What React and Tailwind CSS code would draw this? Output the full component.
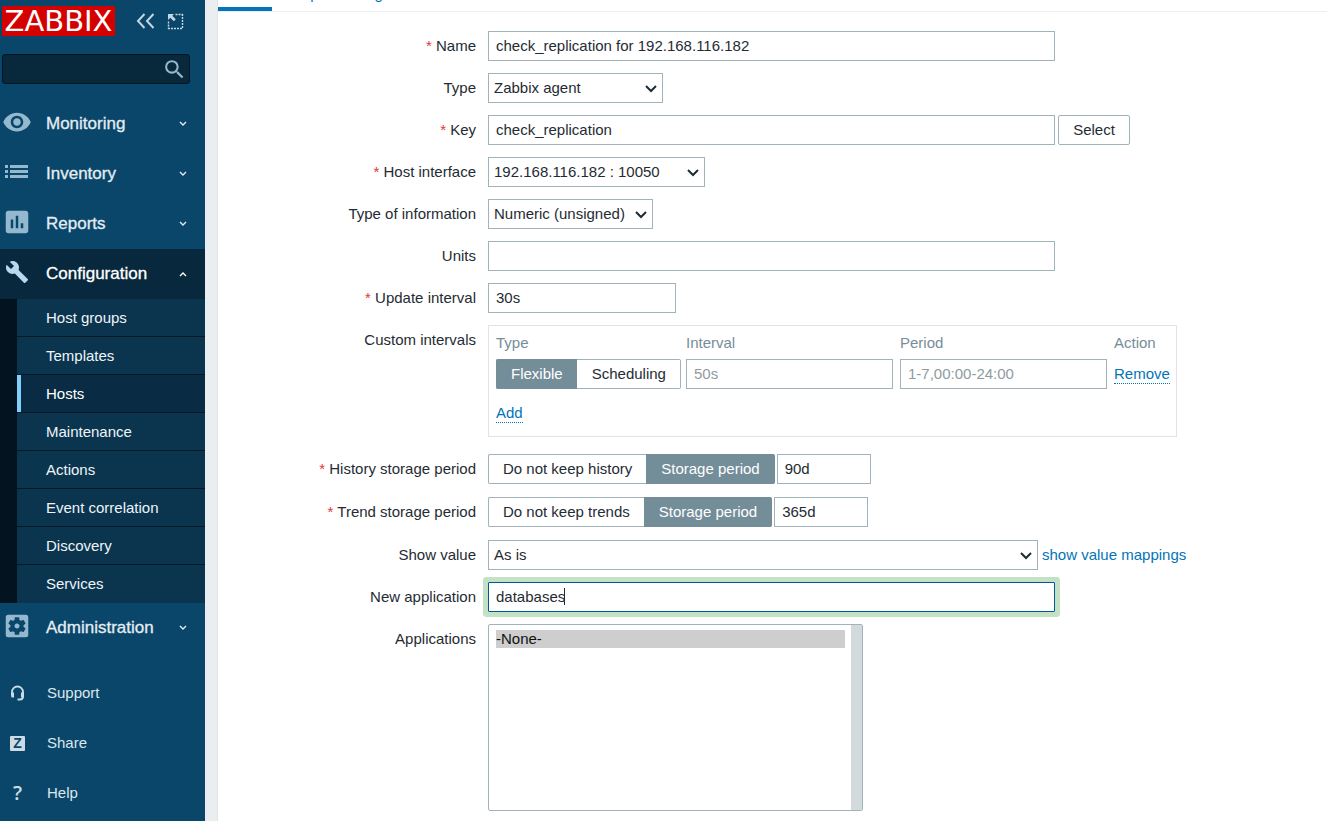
import React, { useEffect, useRef } from 'react';
import { MdVisibility, MdAssessment, MdSettingsApplications, MdSearch } from 'react-icons/md';
import clsx from 'clsx';

const inputClass = 'h-[30px] border border-[#a0b3bb] bg-white px-[7px] pb-[2px] text-[#1f2c33] placeholder:text-[#8f9ba1] outline-none';

const configItems = ['Host groups', 'Templates', 'Hosts', 'Maintenance', 'Actions', 'Event correlation', 'Discovery', 'Services'];

const ListIcon = () => (
    <svg width="24" height="16" viewBox="0 0 24 16" fill="currentColor" aria-hidden="true">
        <path d="M0 1h3v3H0zM5 1h18v3H5zM0 6h3v3H0zM5 6h18v3H5zM0 11h3v3H0zM5 11h18v3H5z" />
    </svg>
);

const WrenchIcon = () => (
    <svg width="24" height="24" viewBox="0 0 24 24" fill="currentColor" className="ml-[5px]" aria-hidden="true">
        <path d="M22.700 19l-9.100-9.100c.9-2.300.4-5-1.500-6.900-2-2-5-2.400-7.400-1.300L9 6 6 9 1.600 4.700C.4 7.100.9 10.100 2.900 12.100c1.900 1.900 4.600 2.400 6.900 1.500l9.100 9.100c.4.4 1 .4 1.400 0l2.300-2.300c.5-.4.5-1.100.1-1.400z" />
    </svg>
);

const HeadsetIcon = () => (
    <svg width="15" height="16" viewBox="0 0 15 16" fill="none" stroke="currentColor" strokeWidth="1.8" aria-hidden="true">
        <path d="M2 10V7a5.500 5.500 0 0 1 11 0v4.500a3 3 0 0 1-3 3H7.500" />
        <path d="M1.100 7.500H4v5H2.600a1.500 1.500 0 0 1-1.500-1.500zM11 7.500h2.900v5H11z" fill="currentColor" stroke="none" />
    </svg>
);

const Chevron = ({ up }) => (
    <svg width="8" height="6" viewBox="0 0 8 6" fill="none" stroke="currentColor" strokeWidth="1.4" aria-hidden="true">
        <path d={up ? 'M1 5l3-3 3 3' : 'M1 1l3 3 3-3'} />
    </svg>
);

const MenuItem = ({ icon, label, open }) => (
    <a
        href="#"
        className={clsx(
            'flex h-[50px] items-center text-[17px] leading-6 [-webkit-text-stroke:0.3px_currentColor]',
            open ? 'bg-[#07283d] text-white' : 'text-[#e3edf3]'
        )}
    >
        <span className={clsx('flex w-[46px] items-center pb-1', open ? 'text-[#b5d9ef]' : 'text-[#94b9cf]')}>{icon}</span>
        <span className="flex-1">{label}</span>
        <span className="pr-[18px]">
            <Chevron up={open} />
        </span>
    </a>
);

const FooterItem = ({ icon, label }) => (
    <a href="#" className="flex h-[50px] items-center text-[#dce7ee]">
        <span className="flex w-[47px] items-center pl-[10px] text-[#cbdce6]">{icon}</span>
        {label}
    </a>
);

const Sidebar = () => (
    <aside className="w-[205px] shrink-0 bg-[#0a466a]">
        <div className="flex h-[42px] items-center pl-[2px]">
            <a href="#" className="flex h-[30px] w-[113px] items-center justify-center bg-[#d40000] font-['DejaVu_Sans'] text-[29px] leading-none text-white">
                ZABBIX
            </a>
            <button type="button" aria-label="Collapse sidebar" className="ml-[21px] text-[#c3d6e2]">
                <svg width="19" height="16" viewBox="0 0 19 16" fill="none" stroke="currentColor" strokeWidth="2">
                    <path d="M8.500 1L2 8l6.500 7M17.500 1L11 8l6.500 7" />
                </svg>
            </button>
            <button type="button" aria-label="Kiosk mode" className="ml-[12px] text-[#c3d6e2]">
                <svg width="17" height="17" viewBox="0 0 17 17" fill="none" stroke="currentColor">
                    <path d="M8.500 1.500H16M15.500 1v15M1.500 8.500V16M1 15.500h15" strokeWidth="1.400" strokeDasharray="2 1" />
                    <path d="M1 1h6L5.300 2.800l3.500 3.500-2 2-3.500-3.500L1 7z" fill="currentColor" stroke="none" />
                </svg>
            </button>
        </div>
        <div className="mt-3 ml-[2px] mr-[15px] flex h-[30px] items-center rounded-[3px] border border-[#031522] bg-[#08283b]">
            <input type="text" aria-label="Search" className="min-w-0 flex-1 bg-transparent px-2 text-white outline-none" />
            <button type="button" aria-label="Search" className="pr-[2px] text-[#94b9cf]">
                <MdSearch size={25} />
            </button>
        </div>

        <nav className="mt-[15px]">
            <MenuItem label="Monitoring" icon={<MdVisibility size={30} className="ml-[2px]" />} />
            <MenuItem label="Inventory" icon={<span className="pl-[5px]"><ListIcon /></span>} />
            <MenuItem label="Reports" icon={<MdAssessment size={30} className="ml-[2px]" />} />
            <MenuItem label="Configuration" open icon={<WrenchIcon />} />
            <ul className="border-l-[17px] border-[#03131f] bg-[#0b344f]">
                {configItems.map((item) => (
                    <li key={item} className="h-[38px] border-b border-[#041a29] last:border-[#0b344f]">
                        <a
                            href="#"
                            className={clsx(
                                'flex h-full items-center border-l-4 pl-[25px]',
                                item === 'Hosts' ? 'border-[#80d0fb] bg-[#092c44] text-white' : 'border-transparent text-[#edf4f8]'
                            )}
                        >
                            {item}
                        </a>
                    </li>
                ))}
            </ul>
            <MenuItem label="Administration" icon={<MdSettingsApplications size={30} className="ml-[2px]" />} />
        </nav>

        <nav className="mt-[15px]">
            <FooterItem label="Support" icon={<HeadsetIcon />} />
            <FooterItem
                label="Share"
                icon={<span className="flex size-[15px] items-center justify-center rounded-[1px] bg-[#cbdce6] text-sm leading-none font-bold text-[#0a466a]">Z</span>}
            />
            <FooterItem label="Help" icon={<span className="w-[15px] text-center font-['Open_Sans'] text-xl leading-none font-semibold">?</span>} />
        </nav>
    </aside>
);

const Row = ({ label, id, required, className, children }) => (
    <div className={clsx('grid grid-cols-[258px_1fr] gap-3', className)}>
        <label htmlFor={id} className="h-[30px] text-right leading-[30px]">
            {required && <span className="text-[#e33734]">* </span>}
            {label}
        </label>
        <div className="flex items-center">{children}</div>
    </div>
);

const Select = ({ id, value, className }) => (
    <div className={clsx('relative', className)}>
        <select id={id} className="h-[30px] w-full appearance-none border border-[#a0b3bb] bg-white pl-[5px] outline-none">
            <option>{value}</option>
        </select>
        <svg className="pointer-events-none absolute top-[12px] right-[5px]" width="13" height="8" viewBox="0 0 13 8" fill="none" stroke="#1f2c33" strokeWidth="2">
            <path d="M1 1l5 5 5-5" />
        </svg>
    </div>
);

const RadioGroup = ({ name, options, selected }) => (
    <div role="radiogroup" aria-label={name} className="flex">
        {options.map((option) => (
            <label
                key={option}
                className={clsx(
                    'flex h-[30px] items-center border px-[14px] whitespace-nowrap first:rounded-l-xs first:border-r-0 last:rounded-r-xs last:border-l-0 last:pl-[15px]',
                    option === selected ? 'border-[#738d99] bg-[#738d99] text-white' : 'border-[#a0b3bb] bg-white'
                )}
            >
                <input type="radio" name={name} defaultChecked={option === selected} className="sr-only" />
                {option}
            </label>
        ))}
    </div>
);

const CustomIntervals = () => (
    <div className="w-[689px] border border-[#dfe4e7] px-[7px] pt-[5px] pb-[13px]">
        <table className="w-full table-fixed text-left">
            <thead>
                <tr className="h-[24px] text-[#768d99]">
                    <th className="w-[190px] font-normal">Type</th>
                    <th className="w-[214px] font-normal">Interval</th>
                    <th className="w-[214px] font-normal">Period</th>
                    <th className="font-normal">Action</th>
                </tr>
            </thead>
            <tbody>
                <tr className="h-[38px]">
                    <td>
                        <RadioGroup name="Interval type" options={['Flexible', 'Scheduling']} selected="Flexible" />
                    </td>
                    <td>
                        <input aria-label="Interval" placeholder="50s" className={clsx(inputClass, 'w-[207px]')} />
                    </td>
                    <td>
                        <input aria-label="Period" placeholder="1-7,00:00-24:00" className={clsx(inputClass, 'w-[207px]')} />
                    </td>
                    <td>
                        <button type="button" className="border-b border-dotted border-[#0275b8] leading-[18px] text-[#0275b8]">Remove</button>
                    </td>
                </tr>
                <tr className="h-[30px]">
                    <td className="align-bottom">
                        <button type="button" className="border-b border-dotted border-[#0275b8] leading-[18px] text-[#0275b8]">Add</button>
                    </td>
                </tr>
            </tbody>
        </table>
    </div>
);

const App = () => {
    const applicationRef = useRef(null);

    useEffect(() => {
        const field = applicationRef.current;
        field.focus();
        field.setSelectionRange(field.value.length, field.value.length);
    }, []);

    return (
        <div className="flex min-h-screen bg-[#ebeef0] font-['Liberation_Sans',Arial,sans-serif] text-[15px] leading-5 text-[#1f2c33]">
            <Sidebar />

            <main className="ml-3 min-w-0 flex-1 border-l border-[#dfe4e7] bg-white">
                {/* Tabs, scrolled almost out of view */}
                <nav className="flex h-3 items-end overflow-hidden border-b border-[#ebeef0]">
                    <a href="#" aria-label="Item" className="h-1 w-[54px] bg-[#0275b8]" />
                    <a href="#" className="px-[15px] pb-[7px] text-[#0275b8]">Preprocessing</a>
                </nav>

                <form className="mt-[19px] flex flex-col gap-3 pb-[10px]">
                    <Row label="Name" id="name" required>
                        <input id="name" defaultValue="check_replication for 192.168.116.182" className={clsx(inputClass, 'w-[567px]')} />
                    </Row>
                    <Row label="Type" id="type">
                        <Select id="type" value="Zabbix agent" className="w-[175px]" />
                    </Row>
                    <Row label="Key" id="key" required>
                        <input id="key" defaultValue="check_replication" className={clsx(inputClass, 'w-[567px]')} />
                        <button type="button" className="ml-[3px] h-[30px] w-[72px] rounded-xs border border-[#a0b3bb]">Select</button>
                    </Row>
                    <Row label="Host interface" id="interface" required>
                        <Select id="interface" value="192.168.116.182 : 10050" className="w-[217px]" />
                    </Row>
                    <Row label="Type of information" id="value-type">
                        <Select id="value-type" value="Numeric (unsigned)" className="w-[165px]" />
                    </Row>
                    <Row label="Units" id="units">
                        <input id="units" className={clsx(inputClass, 'w-[567px]')} />
                    </Row>
                    <Row label="Update interval" id="delay" required>
                        <input id="delay" defaultValue="30s" className={clsx(inputClass, 'w-[188px]')} />
                    </Row>
                    <Row label="Custom intervals">
                        <CustomIntervals />
                    </Row>
                    <Row label="History storage period" id="history" required className="mt-[5px]">
                        <RadioGroup name="History" options={['Do not keep history', 'Storage period']} selected="Storage period" />
                        <input id="history" defaultValue="90d" className={clsx(inputClass, 'ml-[2px] w-[94px]')} />
                    </Row>
                    <Row label="Trend storage period" id="trends" required className="mt-px">
                        <RadioGroup name="Trends" options={['Do not keep trends', 'Storage period']} selected="Storage period" />
                        <input id="trends" defaultValue="365d" className={clsx(inputClass, 'ml-[2px] w-[94px]')} />
                    </Row>
                    <Row label="Show value" id="valuemap" className="mt-px">
                        <Select id="valuemap" value="As is" className="w-[550px]" />
                        <a href="#" className="ml-1 text-[#0275b8]">show value mappings</a>
                    </Row>
                    <Row label="New application" id="new-application">
                        <div className="relative">
                            <input
                                id="new-application"
                                ref={applicationRef}
                                defaultValue="databases"
                                className="block h-[30px] w-[567px] rounded-[1px] border border-[#00589c] bg-white px-[7px] pb-[2px] caret-transparent ring-5 ring-[#c3e2c5] outline-none"
                            />
                            {/* Text cursor */}
                            <span className="pointer-events-none absolute top-[6px] left-[76px] h-[17px] w-px bg-[#1f2c33]" />
                        </div>
                    </Row>
                    <Row label="Applications" id="applications">
                        <div className="flex h-[187px] w-[375px] overflow-hidden rounded-xs border border-[#a0b3bb]">
                            <select id="applications" multiple defaultValue={['0']} className="min-w-0 flex-1 py-[5px] pr-[6px] pl-[7px] outline-none">
                                <option value="0" className="h-[18px] p-0 leading-[18px]">-None-</option>
                            </select>
                            <div className="w-[11px] bg-[#d2dadd]" />
                        </div>
                    </Row>
                </form>
            </main>
        </div>
    );
};

export default App;
